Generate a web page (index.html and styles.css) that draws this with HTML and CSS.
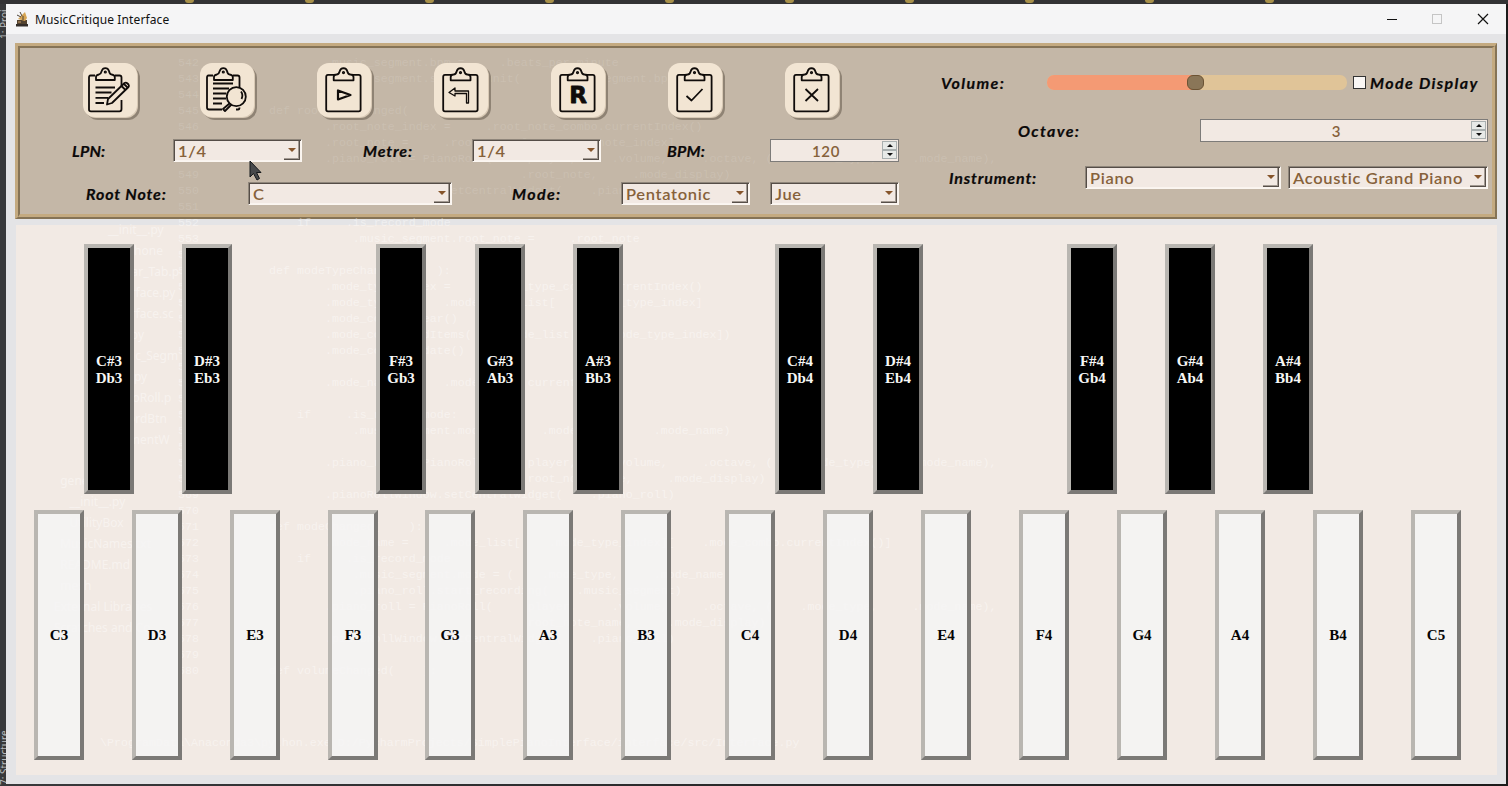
FILE: index.html
```html
<!DOCTYPE html>
<html lang="en">
<head>
<meta charset="utf-8">
<title>MusicCritique Interface</title>
<link rel="stylesheet" href="styles.css">
</head>
<body>
<svg width="0" height="0" class="defs">
  <symbol id="board" viewBox="0 0 54 54">
    <path d="M17 11.800H11Q9.200 11.800 9.200 13.800V46.500Q9.200 48.300 11 48.300H41.800Q43.600 48.300 43.600 46.500V13.800Q43.600 11.800 41.800 11.800H36"/>
    <path d="M16.700 17.300V14Q16.700 11.500 19.500 11.500Q22 11.300 22.600 8.500Q23.500 5.300 26.500 5.200Q29.500 5.300 30.400 8.500Q31 11.300 33.500 11.500Q36.500 11.500 36.500 14V17.300Z"/>
    <circle cx="26.500" cy="9.600" r=".7"/>
  </symbol>
</svg>
<div class="side side-top">1: Proj</div>
<div class="side side-bottom">7: Structure</div>
<div class="tabs"><i></i><i></i><i></i><i></i><i></i><i></i><i></i><i></i><i></i><i></i></div>
<main class="window">
  <header class="titlebar">
    <svg class="app-icon" width="14" height="16" viewBox="0 0 14 16"><path d="M2 9H12V14H2Z" fill="#54432f"/><path d="M1 13H13V15.500H1Z" fill="#332d29"/><path d="M3 8L10 1L12 7L10 10Z" fill="#d6a554"/><path d="M2 4L6 6M5 1L7 5M8 5V9M3 11H8" stroke="#4d4336" fill="none"/><path d="M3 11H6" stroke="#c99b68"/></svg>
    <span class="title">MusicCritique Interface</span>
    <svg class="win-buttons" width="110" height="16" viewBox="0 0 110 16" fill="none"><path d="M5 8.500H15" stroke="#111"/><rect x="50.500" y="3.500" width="9" height="9" stroke="#c5c5c5"/><path d="M96 3L106 13M106 3L96 13" stroke="#111" stroke-width="1.200"/></svg>
  </header>
  <section class="panel">
    <div class="panel-inner">
<pre class="ghost ghost-panel">542                  .music_segment.bpm =     .beats_per_minute
543                  .music_segment.set_per_unit(    .music_segment.bpm)
544
545          def rootNoteChanged(    ):
546                  .root_note_index =     .root_note_combo.currentIndex()
547                  .root_note =     .root_names[    .root_note_index]
548                  .piano_roll = PianoRoll(    .player,     .volume,     .octave, (    .mode_type,     .mode_name),
549                                              .root_note,     .mode_display)
550                  .pianoRollWindow.setCentralWidget(    .piano_roll)
551</pre>
      <div class="left">
        <div class="tools">
          <button class="tool"><svg viewBox="0 0 54 54"><path d="M12 12.500H7.500Q6 12.500 6 14.500V46.500Q6 48.300 8 48.300H36.500Q38.500 48.300 38.500 46V37M38.500 23V14.500Q38.500 12.500 36.500 12.500H32"/><path d="M13 17V14Q13 12 16 11.500Q18 11 18.700 8Q19.700 5.200 22.300 5.200Q25 5.200 26 8Q26.500 11 28.500 11.500Q31.800 12 31.800 14V17Z"/><circle cx="22.300" cy="9" r=".7"/><path d="M12.500 24.500H32M12.500 29.500H28.500M12.500 34.800H25M12.500 40H21"/><path d="M25 36L41.500 20Q43 19 44.500 20.500L45.500 21.500Q46.500 23 45.500 24L29 40L24 41.500ZM38.500 23L42.500 27M41 21L45 25"/></svg></button>
          <button class="tool"><svg viewBox="0 0 54 54"><path d="M13 12.500H8.500Q7 12.500 7 14.500V44.500Q7 46.500 9 46.500H22M36 46.500H38Q39.500 46.500 39.500 44.500M39.500 24V14.500Q39.500 12.500 37.500 12.500H33"/><path d="M14 17V14Q14 12 17 11.500Q19 11 19.700 8Q20.700 5.200 23.300 5.200Q26 5.200 27 8Q27.500 11 29.500 11.500Q32.800 12 32.800 14V17Z"/><circle cx="23.300" cy="9" r=".7"/><path d="M13 20.500H33M13 25.500H29M13 30.500H26M13 35.500H26M13 40.500H22"/><circle cx="36.300" cy="33.700" r="9.500"/><path d="M41 28.500Q43.500 32 41.500 36M29.500 40.500L23 46L25 48L31.500 41.500"/></svg></button>
          <button class="tool"><svg viewBox="0 0 54 54"><use href="#board"/><path d="M21 27.500V36.500L33.500 32Z" stroke-width="2.200"/></svg></button>
          <button class="tool"><svg viewBox="0 0 54 54"><use href="#board"/><path class="thin" d="M21 25L15 29.500L21 33V30.500H32.500V40H34.500V28H21Z"/></svg></button>
          <button class="tool"><svg viewBox="0 0 54 54"><use href="#board"/><text x="27.200" y="40" text-anchor="middle" class="rec">R</text></svg></button>
          <button class="tool"><svg viewBox="0 0 54 54"><use href="#board"/><path d="M18.500 33L23.500 37.500L34.500 26"/></svg></button>
          <button class="tool"><svg viewBox="0 0 54 54"><use href="#board"/><path d="M20.500 26L33 38M33 26L20.500 38"/></svg></button>
        </div>
        <div class="row row-lpn">
          <label class="l1"><span class="label tight">LPN:</span></label><div class="combo"><span>1/4</span><b></b></div>
          <label class="l2"><span class="label">Metre:</span></label><div class="combo"><span>1/4</span><b></b></div>
          <label class="l3"><span class="label tight">BPM:</span></label><div class="spin"><span>120</span><b><i></i><i></i></b></div>
        </div>
        <div class="row row-root">
          <label class="l4"><span class="label">Root Note:</span></label><div class="combo"><span>C</span><b></b></div>
          <label class="l5"><span class="label wide">Mode:</span></label><div class="combo"><span>Pentatonic</span><b></b></div>
          <div class="combo jue"><span>Jue</span><b></b></div>
        </div>
      </div>
      <div class="right">
        <div class="volume"><span class="label wide">Volume:</span><div class="track"><div class="fill"></div><div class="handle"></div></div><div class="check"></div><span class="label wide">Mode Display</span></div>
        <div class="octave"><span class="label wide">Octave:</span><div class="spin"><span>3</span><b><i></i><i></i></b></div></div>
        <div class="instrument"><span class="label">Instrument:</span><div class="combo"><span>Piano</span><b></b></div><div class="combo"><span>Acoustic Grand Piano</span><b></b></div></div>
      </div>
    </div>
  </section>
  <section class="piano">
<pre class="ghost ghost-tree">__init__.py
     iphone
Guitar_Tab.p
Interface.py
Interface.sc
Key.py
Music_Segm
Play.py
PianoRoll.p
RecordBtn
SegmentW</pre>
<pre class="ghost ghost-code">552              if     .is_record_mode
553                      .music_segment.root_note =     .root_note
554
555          def modeTypeChanged(    ):
556                  .mode_type_index =     .mode_type_combo.currentIndex()
557                  .mode_type =     .mode_type_list[    .mode_type_index]
558                  .mode_combo.clear()
559                  .mode_combo.addItems(    .mode_list[    .mode_type_index])
560                  .mode_combo.update()
561
562                  .mode_name =     .mode_combo.currentText()
563
564              if     .is_record_mode:
565                      .music_segment.mode = (    .mode_type,     .mode_name)
566
567                  .piano_roll = PianoRoll(    .player,     .volume,     .octave, (    .mode_type,     .mode_name),
568                                              .root_note_name,     .mode_display)
569                  .pianoRollWindow.setCentralWidget(    .piano_roll)
570
571          def modeChanged(    ):
572                  .mode_name =     .mode_list[    .mode_type_index][    .mode_combo.currentIndex()]
573              if     .is_record_mode
574                      .music_segment.mode = (    .mode_type,     .mode_name)
575                      .piano_roll.start_recording(    .music_segment)
576                  .piano_roll = PianoRoll(    .player,     .volume,     .octave, (    .mode_type,     .mode_name),
577                                              .root_note_name,     .mode_display)
578                  .pianoRollWindow.setCentralWidget(    .piano_roll)
579
580          def volumeChanged(    ):</pre>
<pre class="ghost ghost-files">  generated
     __init__.py
     UtilityBox
  MusicNames.txt
  README.md
  mesh
External Libraries
Scratches and Co</pre>
<pre class="ghost ghost-run">\ProgramData\Anaconda3\python.exe D:/PycharmProjects/SimplePianoInterface/interface/src/Interface.py</pre>
    <div class="keys black">
      <div class="key">C#3<br>Db3</div><div class="key">D#3<br>Eb3</div><div class="key">F#3<br>Gb3</div><div class="key">G#3<br>Ab3</div><div class="key">A#3<br>Bb3</div><div class="key">C#4<br>Db4</div><div class="key">D#4<br>Eb4</div><div class="key">F#4<br>Gb4</div><div class="key">G#4<br>Ab4</div><div class="key">A#4<br>Bb4</div>
    </div>
    <div class="keys white">
      <div class="key">C3</div><div class="key">D3</div><div class="key">E3</div><div class="key">F3</div><div class="key">G3</div><div class="key">A3</div><div class="key">B3</div><div class="key">C4</div><div class="key">D4</div><div class="key">E4</div><div class="key">F4</div><div class="key">G4</div><div class="key">A4</div><div class="key">B4</div><div class="key">C5</div>
    </div>
  </section>
</main>
<svg class="cursor" width="14" height="22" viewBox="0 0 14 22"><path d="M1 1V17L4.500 13.500L8 20L10.500 18.500L7.500 12.500H12Z" fill="#47494b" stroke="#15181b"/></svg>
</body>
</html>
```
FILE: styles.css
```css
* { box-sizing: border-box; }
body {
  margin: 0;
  width: 1508px;
  height: 786px;
  padding: 4px 2px 2px 6px;
  overflow: hidden;
  position: relative;
  background: linear-gradient(90deg, #38393b 0, #38393b 20px, #242425 1000px, #1c1b1b);
  font-family: Lato, "Open Sans", sans-serif;
}
.defs { position: absolute; }
.tabs {
  position: absolute;
  inset: 0 0 auto 0;
  height: 4px;
  padding-left: 185px;
  display: flex;
  gap: 111px;
  background: #333335;
}
.tabs i { width: 9px; height: 3px; background: #a8914a; border-radius: 0 0 4px 4px; }
.side {
  position: absolute;
  z-index: -1;
  left: -2px;
  width: 12px;
  writing-mode: vertical-rl;
  transform: rotate(180deg);
  font: 10px/12px "Noto Sans", sans-serif;
  color: #b9bbbd;
  white-space: nowrap;
}
.side-top { top: 1px; height: 38px; }
.side-bottom { top: 724px; height: 61px; }

.window { width: 1500px; height: 780px; background: #e4e4e6; padding: 0 9px; }
.titlebar {
  height: 30px;
  margin: 0 -9px 9px;
  padding: 0 14px 0 9px;
  display: flex;
  align-items: center;
  background: #f5f5f6;
}
.app-icon { margin-right: 6px; }
.title { font: 12px "Noto Sans", sans-serif; letter-spacing: .12px; color: #111; }
.win-buttons { margin-left: auto; margin-top: -1px; }

.panel {
  height: 176px;
  border-style: solid;
  border-width: 3px 2px 2px 3px;
  border-color: #c4aa80 #857356 #857356 #c4aa80;
}
.panel-inner {
  height: 100%;
  position: relative;
  display: flex;
  border-style: solid;
  border-width: 2px 3px 3px 2px;
  border-color: #857356 #c4aa80 #c4aa80 #857356;
  background: #c4b7a7;
}
.left { width: 879px; padding-top: 15px; position: relative; }
.tools { display: flex; gap: 63px; padding-left: 63px; height: 76px; }
.tool {
  width: 54px;
  height: 54px;
  padding: 0;
  border: 0;
  border-radius: 12px;
  background: #f2e5d3;
  box-shadow: 1px 1px 0 #d8c9b5, 3px 3px 0 #8f8374;
}
.tool svg { width: 54px; height: 54px; display: block; fill: none; stroke: #100c0a; stroke-width: 1.800; stroke-linejoin: round; }
.thin { stroke-width: 1.300; }
.rec { font: bold 23px "DejaVu Sans", sans-serif; fill: #100c0a; stroke: #100c0a; stroke-width: .8; }

.row { display: grid; height: 23px; margin-bottom: 20px; align-items: center; }
.row-lpn { grid-template-columns: 153px 129px 170px 129px 169px 129px; }
.row-root { grid-template-columns: 228px 204px 169px 129px 149px; }
.jue { margin-left: 20px; }
.l1 { padding-left: 52px; }
.l2 { padding-left: 61px; }
.l3 { padding-left: 66px; }
.l4 { padding-left: 66px; }
.l5 { padding-left: 60px; }
.label {
  font: italic bold 16px/22px Lato, sans-serif;
  letter-spacing: .85px;
  color: #0b0909;
  -webkit-text-stroke: .2px #0b0909;
  white-space: nowrap;
}
.label.tight { letter-spacing: .2px; }
.label.wide { letter-spacing: 1.350px; }

.combo, .spin {
  height: 23px;
  display: flex;
  background: #f2e9e3;
  color: #86613a;
  font: 600 15px/20px Lato, sans-serif;
  letter-spacing: .6px;
  white-space: nowrap;
}
.combo {
  border: 1px solid;
  border-color: #8f867b #fbf6f1 #fbf6f1 #8f867b;
  box-shadow: inset 1px 1px 0 #554d47, inset -1px -1px 0 #faf4ef;
  padding: 1px 1px 1px 4px;
  justify-content: space-between;
}
.combo span { transform: scaleX(1.1); transform-origin: left; }
.combo b {
  flex: none;
  width: 16px;
  height: 19px;
  border-style: solid;
  border-color: transparent #574f49 #574f49 transparent;
  border-width: 0 1px 1px 0;
  box-shadow: inset -1px -1px 0 #a39a92;
  display: flex;
  align-items: center;
  justify-content: center;
}
.combo b::before { content: ""; border: solid transparent; border-width: 4px 4px 0; border-top-color: #86552b; }
.spin { border: 1px solid #7d7b79; padding: 1px; }
.spin span { flex: 1; text-align: center; }
.row .spin span { transform: translateX(-1px); }
.spin b { width: 15px; display: grid; grid-template-rows: 9px 9px; }
.spin i { border: 1px solid #a9afaf; background: #e7e9e7; display: grid; place-items: center; }
.spin i::before { content: ""; border: solid transparent; border-width: 0 3px 3px; border-bottom-color: #111; }
.spin i + i::before { border-width: 3px 3px 0; border-top-color: #111; }

.right { width: 589px; position: relative; }
.right > div { display: flex; align-items: center; }
.volume { padding: 23px 0 1px 42px; height: 47px; }
.volume .label:first-child { width: 106px; }
.track { width: 300px; height: 15px; border-radius: 7px; background: #e0c498; position: relative; }
.fill { width: 149px; height: 15px; border-radius: 7px 0 0 7px; background: #f49a74; }
.handle { position: absolute; left: 140px; top: 0; width: 17px; height: 15px; border-radius: 6px; background: #8a7658; border: 1px solid #6b5334; }
.check { width: 13px; height: 13px; margin: 0 4px 0 6px; background: #faf7f5; border: 1px solid #333; }
.octave { padding: 24px 0 0 119px; height: 47px; }
.octave .label { width: 182px; }
.octave .spin { width: 288px; }
.instrument { padding: 24px 0 0 50px; height: 47px; }
.instrument .label { width: 136px; }
.instrument .combo { width: 196px; }
.instrument .combo + .combo { width: 200px; margin-left: 7px; }

.piano { height: 550px; margin: 6px 0 0 1px; padding-top: 19px; background: #f2eae4; position: relative; }
.keys { display: grid; position: relative; }
.key {
  width: 50px;
  height: 250px;
  border: 4px solid;
  border-color: #b9b6b1 #7b7976 #7b7976 #b9b6b1;
  display: grid;
  place-content: center;
  text-align: center;
  font: bold 15px/17px "Liberation Serif", serif;
}
.black { padding-left: 68px; margin-bottom: 16px; grid-template-columns: 98px 194px 99px 98px 202px 98px 194px 98px 98px 50px; }
.black .key { background: #000; color: #f7f7f5; padding-top: 2px; }
.white { padding-left: 18px; grid-template-columns: 98px 98px 98px 97px 98px 98px 104px repeat(8, 98px); }
.white .key { background: rgba(244, 244, 245, .85); color: #050505; }

.ghost {
  position: absolute;
  margin: 0;
  pointer-events: none;
  font: 11.670px/16px "Liberation Mono", monospace;
  color: rgba(255, 255, 255, .42);
}
.ghost-panel { left: 158px; top: 7px; color: rgba(255, 255, 255, .12); }
.ghost-code { left: 162px; top: -10px; }
.ghost-tree { left: 92px; top: -6px; font: 12px/21px "Noto Sans", sans-serif; }
.ghost-files { left: 38px; top: 245px; font: 12px/21px "Noto Sans", sans-serif; }
.ghost-run { left: 84px; top: 510px; }
.cursor { position: absolute; left: 249px; top: 160px; }
```
